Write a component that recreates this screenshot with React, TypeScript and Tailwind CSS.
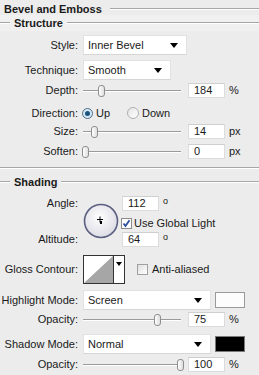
import type { ReactNode } from 'react';

const font = { fontFamily: '"Liberation Sans", Arial, sans-serif' };

function Label({ children }: { children: ReactNode }) {
  return <div className="w-[78px] shrink-0 text-right leading-none">{children}</div>;
}

function Arrow() {
  return (
    <svg width="8" height="5" viewBox="0 0 8 5" className="shrink-0">
      <path d="M0 0 H8 L4 5 Z" fill="#000" />
    </svg>
  );
}

function Dropdown({ value, width }: { value: string; width: string }) {
  return (
    <div
      className={`${width} ml-[5px] h-[20px] flex items-center justify-between pl-[4px] pr-[8px] bg-white border border-[#e2e2e2] border-b-[#d6d6d6]`}
    >
      <span className="leading-none">{value}</span>
      <Arrow />
    </div>
  );
}

function Field({ value }: { value: string }) {
  return (
    <div className="w-[37px] h-[15px] flex items-center pl-[5px] bg-white border border-[#dcdcdc] border-t-[#cfcfcf] leading-none">
      {value}
    </div>
  );
}

function Slider({ pos }: { pos: number }) {
  return (
    <div className="relative w-[104px] h-[14px] ml-[3px] shrink-0">
      <div className="absolute left-[2px] right-[4px] top-[6px] h-[1px] bg-[#9a9a9a]" />
      <div className="absolute left-[2px] right-[4px] top-[7px] h-[1px] bg-white" />
      <div
        className="absolute top-[1px] w-[7px] h-[12px] rounded-[3px] border border-[#8e8e8e] bg-gradient-to-r from-white to-[#dedede]"
        style={{ left: pos }}
      />
    </div>
  );
}

function Legend({ children, indent }: { children: ReactNode; indent?: boolean }) {
  return (
    <div className="flex items-center h-[16px]">
      {indent && <div className="w-[10px] h-[2px] border-t border-[#a6a6a6] border-b border-b-white" />}
      <span className={`font-bold leading-none ${indent ? 'px-[4px]' : 'pl-[4px] pr-[8px]'}`}>{children}</span>
      <div className="flex-1 h-[2px] border-t border-[#a6a6a6] border-b border-b-white" />
    </div>
  );
}

function SliderRow({ label, pos, value, unit, className }: { label: string; pos: number; value: string; unit: string; className: string }) {
  return (
    <div className={`flex items-center h-[15px] ${className}`}>
      <Label>{label}</Label>
      <Slider pos={pos} />
      <div className="ml-[3px]">
        <Field value={value} />
      </div>
      <span className="ml-[4px] leading-none">{unit}</span>
    </div>
  );
}

export default function App() {
  return (
    <div className="w-[259px] h-[375px] overflow-hidden bg-[#ececec] text-[11px] text-[#1a1a1a]" style={font}>
      <div className="h-[15px] pt-[1px]">
        <Legend>Bevel and Emboss</Legend>
      </div>
      <div className="bg-[#f0f0f0]">
        <Legend indent>Structure</Legend>
      </div>

      <div className="flex items-center mt-[4px]">
        <Label>Style:</Label>
        <Dropdown value="Inner Bevel" width="w-[104px]" />
      </div>
      <div className="flex items-center mt-[5px]">
        <Label>Technique:</Label>
        <Dropdown value="Smooth" width="w-[88px]" />
      </div>

      <SliderRow label="Depth:" pos={17} value="184" unit="%" className="mt-[3px]" />

      <div className="flex items-center h-[16px] mt-[7px]">
        <Label>Direction:</Label>
        <div className="ml-[4px] w-[11px] h-[11px] rounded-full border border-[#4a6f8c] bg-[#d7e6f3] flex items-center justify-center">
          <div className="w-[5px] h-[5px] rounded-full bg-[#17547f]" />
        </div>
        <span className="ml-[3px] leading-none">Up</span>
        <div className="ml-[17px] w-[12px] h-[12px] rounded-full border border-[#b0b0b0] bg-gradient-to-br from-[#e4e4e4] to-white" />
        <span className="ml-[3px] leading-none">Down</span>
      </div>

      <SliderRow label="Size:" pos={10} value="14" unit="px" className="mt-[3px]" />
      <SliderRow label="Soften:" pos={1} value="0" unit="px" className="mt-[5px]" />

      <div className="mt-[8px] h-[2px] border-t border-[#a6a6a6] border-b border-b-white" />
      <div className="h-[5px]" />
      <Legend indent>Shading</Legend>

      <div className="flex mt-[6px]">
        <div className="w-[78px] shrink-0 flex flex-col items-end">
          <div className="h-[15px] flex items-center leading-none">Angle:</div>
          <div className="h-[21px]" />
          <div className="h-[15px] flex items-center leading-none">Altitude:</div>
        </div>
        <div className="w-[44px] shrink-0 pt-[7px] pl-[5px]">
          <svg width="36" height="36" viewBox="0 0 36 36">
            <defs>
              <radialGradient id="dial" cx="0.45" cy="0.4" r="0.6">
                <stop offset="0" stopColor="#ffffff" />
                <stop offset="1" stopColor="#dcdce4" />
              </radialGradient>
            </defs>
            <circle cx="18" cy="18" r="16.5" fill="url(#dial)" stroke="#5c5f80" strokeWidth="1.6" />
            <path d="M17 13.5 V19.5 M14 16.5 H20" stroke="#000" strokeWidth="1" />
            <rect x="17" y="18" width="2" height="3" fill="#000" />
          </svg>
        </div>
        <div className="flex flex-col">
          <div className="flex items-center h-[15px]">
            <Field value="112" />
            <span className="ml-[4px] -mt-[5px] text-[9px] leading-none">o</span>
          </div>
          <div className="flex items-center h-[12px] mt-[6px] -ml-[1px]">
            <div className="w-[11px] h-[11px] border border-[#8c8c8c] bg-white flex items-center justify-center">
              <svg width="9" height="9" viewBox="0 0 9 9">
                <path d="M1.5 4.5 L3.5 7 L7.5 1.2" fill="none" stroke="#2d4f9e" strokeWidth="1.8" />
              </svg>
            </div>
            <span className="ml-[2px] leading-none">Use Global Light</span>
          </div>
          <div className="flex items-center h-[15px] mt-[3px]">
            <Field value="64" />
            <span className="ml-[4px] -mt-[5px] text-[9px] leading-none">o</span>
          </div>
        </div>
      </div>

      <div className="flex items-center mt-[8px]">
        <Label>Gloss Contour:</Label>
        <div className="ml-[5px] w-[42px] h-[29px] flex border border-[#333] bg-white">
          <svg width="29" height="27" viewBox="0 0 29 27" className="shrink-0">
            <path d="M0 27 L29 0 V27 Z" fill="#a6a6a6" />
          </svg>
          <div className="flex-1 border-l border-[#333] flex justify-center pt-[6px]">
            <svg width="6" height="4" viewBox="0 0 6 4">
              <path d="M0 0 H6 L3 4 Z" fill="#000" />
            </svg>
          </div>
        </div>
        <div className="ml-[12px] w-[11px] h-[11px] border border-[#a0a0a0] bg-gradient-to-br from-[#e0e0e0] to-white" />
        <span className="ml-[4px] leading-none">Anti-aliased</span>
      </div>

      <div className="flex items-center mt-[6px]">
        <Label>Highlight Mode:</Label>
        <Dropdown value="Screen" width="w-[128px]" />
        <div className="ml-[4px] w-[30px] h-[16px] bg-[#fcfcfc] border border-[#9a9a9a]" />
      </div>
      <SliderRow label="Opacity:" pos={73} value="75" unit="%" className="mt-[2px]" />

      <div className="flex items-center mt-[7px]">
        <Label>Shadow Mode:</Label>
        <Dropdown value="Normal" width="w-[128px]" />
        <div className="ml-[4px] w-[30px] h-[16px] bg-black border border-[#7a7a7a]" />
      </div>
      <SliderRow label="Opacity:" pos={96} value="100" unit="%" className="mt-[3px]" />
    </div>
  );
}
